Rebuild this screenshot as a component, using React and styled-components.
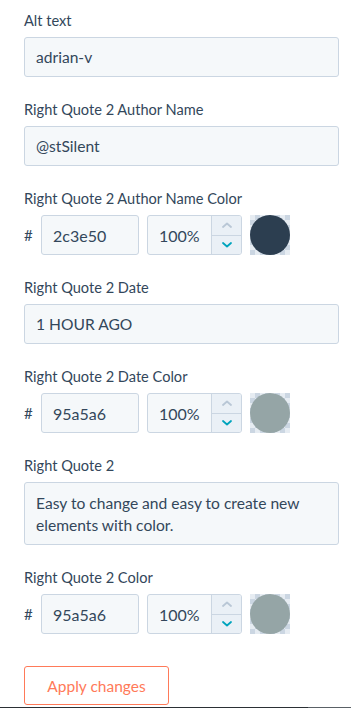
import React from "react";
import styled, { createGlobalStyle } from "styled-components";

const Global = createGlobalStyle`
  html, body { margin: 0; padding: 0; background: #fff; }
  body { font-family: Lato, "Open Sans", sans-serif; color: #33475b; }
  * { box-sizing: border-box; }
`;

const Panel = styled.div`
  width: 351px;
  display: flex;
  flex-direction: column;
  padding: 11px 12px 0 24px;
`;

const Field = styled.div`
  display: flex;
  flex-direction: column;
  margin-bottom: 23px;
`;

const Label = styled.div`
  font-size: 14.6px;
  line-height: 20px;
  height: 20px;
  margin-bottom: 6px;
  color: #33475b;
`;

const TextBox = styled.div`
  width: 315px;
  height: ${(p) => (p.$multi ? "63px" : "40px")};
  background: #f5f8fa;
  border: 1px solid #cbd6e2;
  border-radius: 3px;
  padding: ${(p) => (p.$multi ? "9px 11px" : "0 11px")};
  display: flex;
  align-items: ${(p) => (p.$multi ? "flex-start" : "center")};
  font-size: 15.6px;
  line-height: 22px;
  color: #33475b;
`;

const ColorRow = styled.div`
  display: flex;
  align-items: center;
  height: 40px;
`;

const Hash = styled.span`
  font-size: 15px;
  width: 17px;
  color: #33475b;
`;

const HexBox = styled.div`
  width: 98px;
  height: 40px;
  background: #f5f8fa;
  border: 1px solid #cbd6e2;
  border-radius: 3px;
  padding: 0 11px;
  display: flex;
  align-items: center;
  font-size: 16px;
  color: #33475b;
`;

const PercentBox = styled.div`
  width: 95px;
  height: 40px;
  margin-left: 8px;
  background: #f5f8fa;
  border: 1px solid #cbd6e2;
  border-radius: 3px;
  display: flex;
  overflow: hidden;
`;

const PercentValue = styled.div`
  flex: 1;
  display: flex;
  align-items: center;
  padding-left: 11px;
  font-size: 16px;
  color: #33475b;
`;

const Stepper = styled.div`
  width: 30px;
  border-left: 1px solid #cbd6e2;
  display: flex;
  flex-direction: column;
  background: #eaf0f6;
`;

const StepBtn = styled.div`
  flex: 1;
  display: flex;
  align-items: center;
  justify-content: center;
  & + & { border-top: 1px solid #cbd6e2; }
`;

const Swatch = styled.div`
  width: 40px;
  height: 40px;
  margin-left: 8px;
  background-color: #cbd6e2;
  background-image: conic-gradient(#cbd6e2 25%, #e6ecf2 0 50%, #cbd6e2 0 75%, #e6ecf2 0);
  background-size: 10px 10px;
  display: flex;
`;

const Dot = styled.div`
  flex: 1;
  border-radius: 50%;
  background: ${(p) => p.$color};
`;

const Button = styled.button`
  margin-top: 9px;
  width: 145px;
  height: 39px;
  background: #fff;
  border: 1px solid #ff7a59;
  border-radius: 3px;
  color: #ff7a59;
  font-family: Lato, "Open Sans", sans-serif;
  font-size: 15.5px;
  padding: 0;
`;

const BottomLine = styled.div`
  margin-top: 2px;
  height: 2px;
  width: 351px;
  background: linear-gradient(to right, #2b3035 0 308px, #5a6166 308px);
`;

const Chevron = ({ up, color }) => (
  <svg width="10" height="6" viewBox="0 0 10 6">
    <polyline
      points={up ? "1,5 5,1.5 9,5" : "1,1 5,4.5 9,1"}
      fill="none"
      stroke={color}
      strokeWidth="1.8"
      strokeLinecap="round"
      strokeLinejoin="round"
    />
  </svg>
);

const ColorField = ({ label, hex }) => (
  <Field>
    <Label>{label}</Label>
    <ColorRow>
      <Hash>#</Hash>
      <HexBox>{hex}</HexBox>
      <PercentBox>
        <PercentValue>100%</PercentValue>
        <Stepper>
          <StepBtn><Chevron up color="#b9c7d6" /></StepBtn>
          <StepBtn><Chevron color="#00a4bd" /></StepBtn>
        </Stepper>
      </PercentBox>
      <Swatch><Dot $color={"#" + hex} /></Swatch>
    </ColorRow>
  </Field>
);

const TextField = ({ label, value, multi }) => (
  <Field>
    <Label>{label}</Label>
    <TextBox $multi={multi}>{value}</TextBox>
  </Field>
);

export default function App() {
  return (
    <>
      <Global />
      <Panel>
        <TextField label="Alt text" value="adrian-v" />
        <TextField label="Right Quote 2 Author Name" value="@stSilent" />
        <ColorField label="Right Quote 2 Author Name Color" hex="2c3e50" />
        <TextField label="Right Quote 2 Date" value="1 HOUR AGO" />
        <ColorField label="Right Quote 2 Date Color" hex="95a5a6" />
        <TextField
          label="Right Quote 2"
          value="Easy to change and easy to create new elements with color."
          multi
        />
        <ColorField label="Right Quote 2 Color" hex="95a5a6" />
        <Button>Apply changes</Button>
      </Panel>
      <BottomLine />
    </>
  );
}
